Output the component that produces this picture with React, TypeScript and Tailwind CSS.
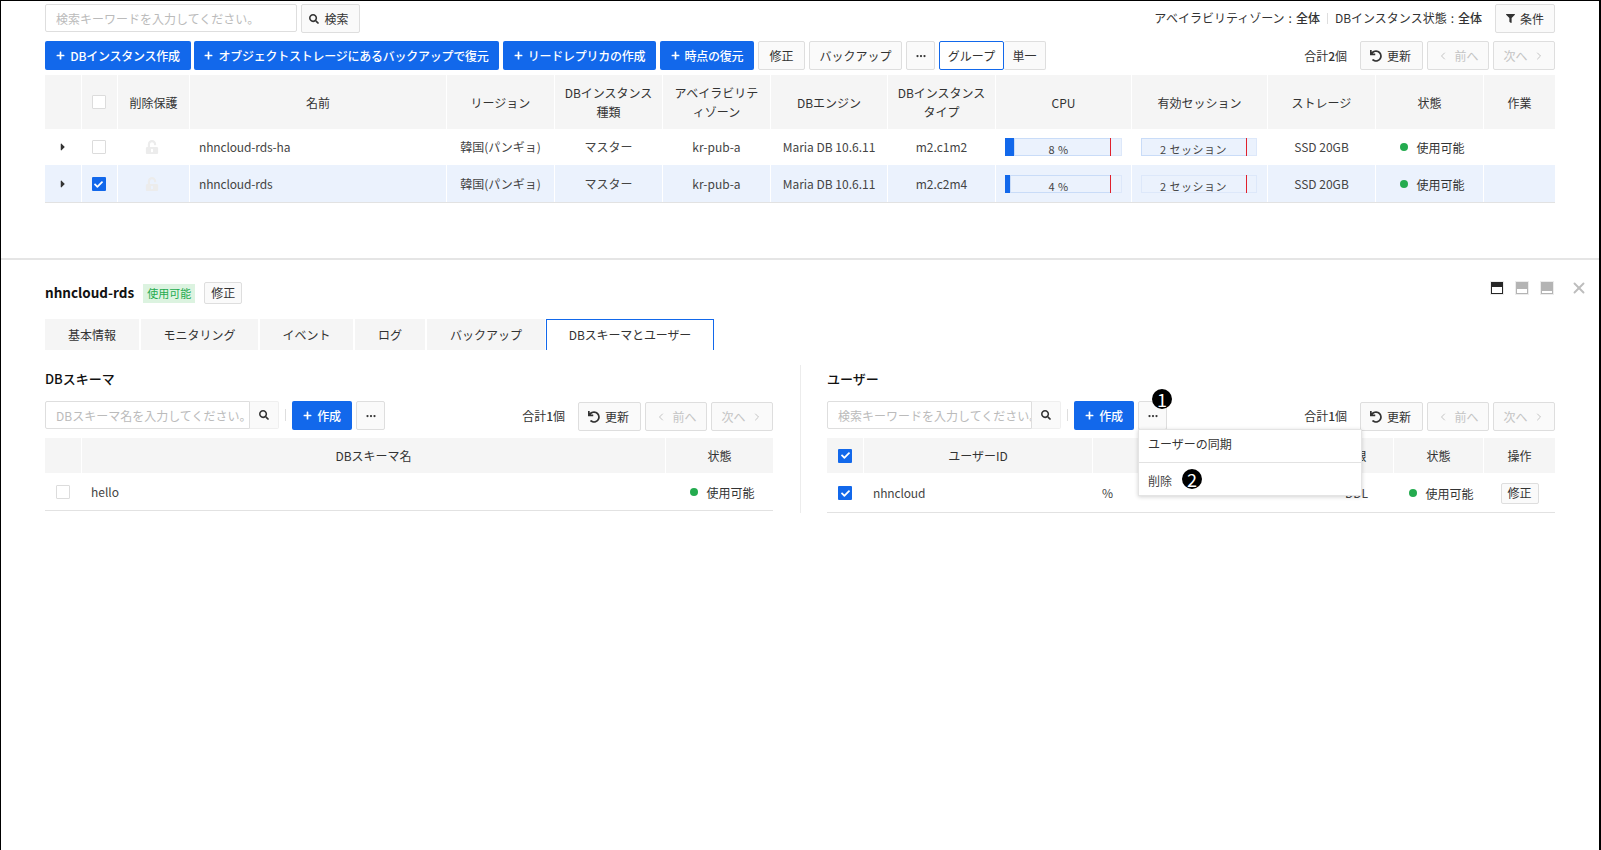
import type { ReactNode } from "react";
import { ChevronLeft, ChevronRight, Ellipsis, X } from "lucide-react";
import { FaCaretRight, FaCheck, FaFilter, FaPlus, FaSearch, FaUndo, FaUnlockAlt } from "react-icons/fa";

const instanceCols =
  "grid grid-cols-[37px_36px_72px_257px_108px_108px_108px_117px_108px_136px_136px_108px_108px_71px]";

function Btn({ children, className = "" }: { children: ReactNode; className?: string }) {
  return (
    <button className={`flex h-[29px] items-center justify-center gap-[5px] rounded-[2px] border border-[#dedede] bg-[#fafafa] text-xs text-[#333] ${className}`}>
      {children}
    </button>
  );
}

function Primary({ children, className = "" }: { children: ReactNode; className?: string }) {
  return (
    <button className={`flex h-[29px] items-center justify-center gap-[5px] rounded-[2px] bg-[#1268eb] text-xs font-medium tracking-[-0.25px] text-white ${className}`}>
      <FaPlus size={9} />
      {children}
    </button>
  );
}

function More({ className = "" }: { className?: string }) {
  return (
    <Btn className={`w-[29px] ${className}`}>
      <Ellipsis size={12} strokeWidth={2.5} />
    </Btn>
  );
}

function Pager({ className = "" }: { className?: string }) {
  return (
    <div className={`flex items-center gap-1 ${className}`}>
      <Btn className="w-[63px] gap-2 pr-[2px]">
        <FaUndo size={12} />
        更新
      </Btn>
      <Btn className="w-[62px] text-[#c4c4c4]">
        <ChevronLeft size={12} />
        前へ
      </Btn>
      <Btn className="w-[62px] text-[#c4c4c4]">
        次へ
        <ChevronRight size={12} />
      </Btn>
    </div>
  );
}

function Check({ on = false }: { on?: boolean }) {
  return on ? (
    <span className="flex h-[14px] w-[14px] items-center justify-center rounded-[1px] bg-[#1268eb] text-white">
      <FaCheck size={9} />
    </span>
  ) : (
    <span className="h-[14px] w-[14px] rounded-[1px] border border-[#dcdcdc] bg-white" />
  );
}

function Status() {
  return (
    <span className="flex items-center gap-2 pl-[6px] text-xs text-[#333]">
      <span className="h-[8px] w-[8px] rounded-full bg-[#24ab4f]" />
      <span className="pt-[2px]">使用可能</span>
    </span>
  );
}

function Cell({ children, className = "" }: { children?: ReactNode; className?: string }) {
  return (
    <div className={`flex items-center justify-center border-r border-white text-center ${className}`}>{children}</div>
  );
}

function Meter({
  fill,
  label,
  red,
  strong,
  className,
  labelClass,
}: {
  fill: number;
  label: string;
  red: number;
  strong: boolean;
  className: string;
  labelClass: string;
}) {
  const edge = strong ? "border-[#c9dcf8]" : "border-[#dde8fa]";
  return (
    <div className={`relative flex h-[18px] bg-[#ebf2fd] ${className}`}>
      {fill > 0 && <div className="h-full bg-[#1268eb]" style={{ width: fill }} />}
      <div className={`h-full border-y border-l ${edge}`} style={{ width: red }} />
      <div className="h-full flex-1 border-y border-r border-[#dde8fa]" />
      <span className={`absolute inset-x-0 top-[3px] pr-[10px] text-center text-[11px] leading-[16px] text-[#444] ${labelClass}`}>
        {label}
      </span>
      <span className="absolute top-0 h-[18px] w-px bg-[#e0202c]" style={{ left: fill + red }} />
    </div>
  );
}

function InstanceRow({
  name,
  type,
  cpu,
  selected,
}: {
  name: string;
  type: string;
  cpu: { fill: number; label: string };
  selected?: boolean;
}) {
  const bg = selected ? "h-[38px] border-b border-[#e2e2e2] bg-[#ebf2fd] [&>div]:pt-[1px]" : "h-[36px] bg-white";
  return (
    <div className={`${instanceCols} ${bg} text-xs text-[#444]`}>
      <Cell>
        <FaCaretRight size={12} className="text-[#333]" />
      </Cell>
      <Cell className="pr-[2px]">
        <Check on={selected} />
      </Cell>
      <Cell className="pr-[3px]">
        <FaUnlockAlt size={14} className="text-[#ececec]" />
      </Cell>
      <Cell className="justify-start pl-[9px] tracking-[-0.15px]">{name}</Cell>
      <Cell>韓国(パンギョ)</Cell>
      <Cell>マスター</Cell>
      <Cell>kr-pub-a</Cell>
      <Cell>Maria DB 10.6.11</Cell>
      <Cell>{type}</Cell>
      <Cell className="justify-start pl-[9px]">
        <Meter fill={cpu.fill} label={cpu.label} red={105 - cpu.fill} strong className="w-[117px]" labelClass="tracking-[0.5px]" />
      </Cell>
      <Cell className="pr-[2px]">
        <Meter fill={0} label="2 セッション" red={105} strong={selected !== true} className="w-[116px]" labelClass="tracking-[0.5px]" />
      </Cell>
      <Cell>SSD 20GB</Cell>
      <Cell>
        <Status />
      </Cell>
      <Cell className="border-r-0" />
    </div>
  );
}

function Search({ placeholder }: { placeholder: string }) {
  return (
    <div className="flex h-[28px] flex-1">
      <input
        placeholder={placeholder}
        className="h-full min-w-0 flex-1 rounded-l-[2px] border border-[#dedede] pl-[10px] pr-0 text-xs outline-none placeholder:text-[#bbb]"
      />
      <button className="flex h-full w-[29px] items-center justify-center rounded-r-[2px] border-y border-r border-[#efefef] bg-[#fafafa] text-[#333]">
        <FaSearch size={10} />
      </button>
    </div>
  );
}

function NumberBadge({ n, className }: { n: string; className: string }) {
  return (
    <span className={`absolute flex h-[20px] w-[20px] items-center justify-center rounded-full bg-black text-[18px] leading-none text-white ${className}`}>
      {n}
    </span>
  );
}

function PaneToolbar({ placeholder, menu }: { placeholder: string; menu?: boolean }) {
  return (
    <div className="mt-2 flex items-start">
      <div className="flex w-[234px]">
        <Search placeholder={placeholder} />
      </div>
      <span className="mx-[6px] mt-[8px] h-[12px] w-px bg-[#dedede]" />
      <Primary className="w-[60px]">作成</Primary>
      {menu ? (
        <div className="relative ml-[4px]">
          <More className="border-[#b0b0b0]" />
          <NumberBadge n="1" className="left-[14px] top-[-12px]" />
          <div className="absolute left-0 top-[28px] z-10 w-[224px] border border-[#e4e4e4] bg-white text-xs text-[#333] shadow-[0_1px_4px_rgba(0,0,0,0.18)]">
            <div className="flex h-[33px] items-center border-b border-[#e2e2e2] px-[9px] pb-[4px]">ユーザーの同期</div>
            <div className="relative flex h-[32px] items-center px-[9px] pt-[3px] text-[#444]">
              削除
              <NumberBadge n="2" className="left-[43px] top-[6px]" />
            </div>
          </div>
        </div>
      ) : (
        <More className="ml-[4px]" />
      )}
      <div className="ml-auto mr-[13px] self-center text-xs text-[#333]">
        合計<b className="font-medium">1</b>個
      </div>
      <Pager className="mt-[1px]" />
    </div>
  );
}

export default function App() {
  return (
    <div className="h-[850px] w-[1601px] overflow-hidden border-l border-r-2 border-t border-black bg-white font-['Noto_Sans_CJK_JP','Noto_Sans',sans-serif] text-xs text-[#333]">
      <section className="h-[257px] pl-[44px] pr-[44px] pt-[3px]">
        <div className="flex items-start">
          <input
            placeholder="検索キーワードを入力してください。"
            className="h-[28px] w-[252px] rounded-[2px] border border-[#dedede] px-[10px] text-xs outline-none placeholder:text-[#bbb]"
          />
          <Btn className="ml-[4px] w-[59px] pr-[3px]">
            <FaSearch size={10} />
            検索
          </Btn>
          <div className="ml-auto flex h-[28px] items-center">
            アベイラビリティゾーン<span className="mx-[4px]">:</span>
            <b className="font-medium">全体</b>
            <span className="mx-[7px] h-[11px] w-px bg-[#dedede]" />
            DBインスタンス状態<span className="mx-[4px]">:</span>
            <b className="font-medium">全体</b>
          </div>
          <Btn className="ml-[13px] w-[60px]">
            <FaFilter size={9} />
            条件
          </Btn>
        </div>

        <div className="mt-2 flex items-center">
          <Primary className="w-[146px]">DBインスタンス作成</Primary>
          <Primary className="ml-[3px] w-[305px]">オブジェクトストレージにあるバックアップで復元</Primary>
          <Primary className="ml-[4px] w-[153px]">リードレプリカの作成</Primary>
          <Primary className="ml-[4px] w-[94px]">時点の復元</Primary>
          <Btn className="ml-[4px] w-[47px]">修正</Btn>
          <Btn className="ml-[4px] w-[93px]">バックアップ</Btn>
          <More className="ml-[4px]" />
          <button className="ml-[4px] flex h-[29px] w-[65px] items-center justify-center rounded-[2px] border border-[#1268eb] bg-white text-xs text-[#333]">
            グループ
          </button>
          <Btn className="w-[42px] border-l-0">単一</Btn>
          <div className="ml-auto mr-[13px] text-xs text-[#333]">
            合計<b className="font-medium">2</b>個
          </div>
          <Pager />
        </div>

        <div className={`${instanceCols} mt-[5px] h-[54px] bg-[#f5f5f5] leading-[19px]`}>
          <Cell />
          <Cell className="pr-[2px]">
            <Check />
          </Cell>
          <Cell>削除保護</Cell>
          <Cell>名前</Cell>
          <Cell>リージョン</Cell>
          <Cell className="px-2">DBインスタンス種類</Cell>
          <Cell className="px-2">アベイラビリティゾーン</Cell>
          <Cell>DBエンジン</Cell>
          <Cell className="px-2">DBインスタンスタイプ</Cell>
          <Cell>CPU</Cell>
          <Cell>有効セッション</Cell>
          <Cell>ストレージ</Cell>
          <Cell>状態</Cell>
          <Cell className="border-r-0">作業</Cell>
        </div>
        <InstanceRow name="nhncloud-rds-ha" type="m2.c1m2" cpu={{ fill: 9, label: "8 %" }} />
        <InstanceRow name="nhncloud-rds" type="m2.c2m4" cpu={{ fill: 5, label: "4 %" }} selected />
      </section>

      <section className="relative border-t-2 border-[#e5e5e5] pl-[44px] pr-[44px] pt-[22px]">
        <div className="flex h-[22px] items-center">
          <h2 className="pb-[2px] text-[13.5px] font-bold text-[#111]">nhncloud-rds</h2>
          <span className="ml-[9px] flex h-[19px] w-[52px] items-center justify-center bg-[#dcf3e0] text-[11px] text-[#24ab4f]">
            使用可能
          </span>
          <Btn className="ml-[9px] !h-[22px] w-[38px]">修正</Btn>
          <div className="-mt-[1px] ml-auto mr-[1px] flex gap-[11px] self-start">
            <LayoutIcon tone="bg-[#262626]" bar="h-[6px]" />
            <LayoutIcon tone="bg-[#b4b4b4]" bar="h-[4px]" />
            <LayoutIcon tone="bg-[#b4b4b4]" bar="h-[2px]" />
          </div>
        </div>
        <X size={18} strokeWidth={2.5} className="absolute right-[11px] top-[19px] text-[#bdbdbd]" />

        <div className="mt-[15px] flex h-[31px] gap-[2px] text-xs">
          <Tab className="w-[94px]">基本情報</Tab>
          <Tab className="w-[117px]">モニタリング</Tab>
          <Tab className="w-[93px]">イベント</Tab>
          <Tab className="w-[70px]">ログ</Tab>
          <Tab className="w-[118px]">バックアップ</Tab>
          <div className="-ml-[1px] flex w-[168px] items-center justify-center border-x border-t border-[#1268eb] bg-white tracking-[-0.15px]">
            DBスキーマとユーザー
          </div>
        </div>

        <div className="mt-[15px] flex">
          <div className="w-[728px]">
            <h3 className="flex h-[28px] items-center text-[13px] font-medium text-[#111]">DBスキーマ</h3>
            <PaneToolbar placeholder="DBスキーマ名を入力してください。" />
            <div className="mt-[7px] grid h-[35px] grid-cols-[37px_584px_107px] bg-[#f5f5f5]">
              <Cell />
              <Cell>DBスキーマ名</Cell>
              <Cell className="border-r-0">状態</Cell>
            </div>
            <div className="grid h-[38px] grid-cols-[37px_584px_107px] border-b border-[#e2e2e2] text-[#444] [&>div]:pt-[1px]">
              <Cell>
                <Check />
              </Cell>
              <Cell className="justify-start pl-[9px]">hello</Cell>
              <Cell className="border-r-0">
                <Status />
              </Cell>
            </div>
          </div>

          <div className="ml-[27px] mr-[26px] h-[148px] w-px bg-[#ececec]" />

          <div className="w-[728px]">
            <h3 className="flex h-[28px] items-center text-[13px] font-medium text-[#111]">ユーザー</h3>
            <PaneToolbar placeholder="検索キーワードを入力してください。" menu />
            <div className="mt-[7px] grid h-[35px] grid-cols-[37px_229px_223px_78px_90px_71px] bg-[#f5f5f5]">
              <Cell>
                <Check on />
              </Cell>
              <Cell>ユーザーID</Cell>
              <Cell />
              <Cell>権限</Cell>
              <Cell>状態</Cell>
              <Cell className="border-r-0">操作</Cell>
            </div>
            <div className="grid h-[40px] grid-cols-[37px_229px_223px_78px_90px_71px] border-b border-[#e2e2e2] text-[#444] [&>div]:pt-[1px]">
              <Cell>
                <Check on />
              </Cell>
              <Cell className="justify-start pl-[9px] tracking-[-0.15px]">nhncloud</Cell>
              <Cell className="justify-start pl-[9px]">%</Cell>
              <Cell className="pl-[4px]">DDL</Cell>
              <Cell>
                <Status />
              </Cell>
              <Cell className="border-r-0">
                <Btn className="!h-[21px] w-[38px]">修正</Btn>
              </Cell>
            </div>
          </div>
        </div>
      </section>
    </div>
  );
}

function Tab({ children, className = "" }: { children: ReactNode; className?: string }) {
  return <div className={`flex items-center justify-center bg-[#f5f5f5] ${className}`}>{children}</div>;
}

function LayoutIcon({ tone, bar }: { tone: string; bar: string }) {
  return (
    <span className={`flex h-[14px] w-[14px] items-end border border-[#ececec] px-[1px] pb-[1px] ${tone}`}>
      <span className={`w-full bg-white ${bar}`} />
    </span>
  );
}
